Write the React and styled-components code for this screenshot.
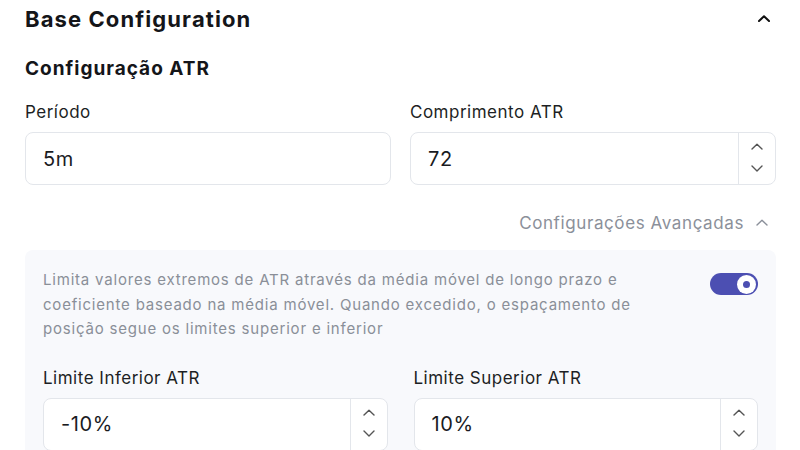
import React from "react";
import styled, { createGlobalStyle } from "styled-components";

const Global = createGlobalStyle`
  html, body { margin: 0; padding: 0; background: #fff; }
  body { font-family: Inter, "Noto Sans", sans-serif; color: #151619; }
  * { box-sizing: border-box; }
`;

const Page = styled.div`
  width: 800px;
  height: 450px;
  overflow: hidden;
  padding: 0 24px 0 25px;
`;

const Header = styled.div`
  display: flex;
  align-items: center;
  justify-content: space-between;
  height: 37px;
  padding-right: 6px;
`;

const Title = styled.h1`
  margin: 0;
  font-size: 22px;
  letter-spacing: 1.1px;
  font-weight: 700;
  color: #141519;
`;

const SubTitle = styled.h2`
  margin: 13px 0 0;
  font-size: 19px;
  letter-spacing: 1px;
  font-weight: 700;
  line-height: 38px;
  color: #141519;
`;

const Grid = styled.div`
  display: grid;
  grid-template-columns: 1fr 1fr;
  column-gap: ${(p) => p.$gap}px;
  margin-top: ${(p) => p.$top || 0}px;
`;

const Field = styled.div`
  display: flex;
  flex-direction: column;
`;

const Label = styled.label`
  font-size: 17px;
  letter-spacing: 0.5px;
  line-height: 24px;
  color: #1d1f24;
  margin-bottom: 8px;
`;

const InputBox = styled.div`
  display: flex;
  height: 53px;
  background: #fff;
  border: 1px solid #e3e6eb;
  border-radius: 8px;
  overflow: hidden;
`;

const Value = styled.div`
  flex: 1;
  display: flex;
  align-items: center;
  padding-left: 17px;
  font-size: 20px;
  letter-spacing: 0.6px;
  color: #1a1b1f;
`;

const Stepper = styled.div`
  width: 37px;
  border-left: 1px solid #e3e6eb;
  display: flex;
  flex-direction: column;
  align-items: center;
  justify-content: center;
  gap: 14px;
  padding-bottom: 2px;
`;

const AdvancedRow = styled.div`
  display: flex;
  justify-content: flex-end;
  align-items: center;
  gap: 12px;
  margin-top: 26px;
  padding-right: 8px;
  height: 24px;
  font-size: 17px;
  letter-spacing: 0.6px;
  color: #8b909a;
`;

const Panel = styled.div`
  margin-top: 15px;
  background: #f8f9fc;
  border-radius: 8px;
  padding: 18px 18px 20px 18px;
  height: 220px;
`;

const DescRow = styled.div`
  display: flex;
  justify-content: space-between;
  align-items: flex-start;
`;

const Desc = styled.p`
  margin: 0;
  max-width: 610px;
  font-size: 15px;
  letter-spacing: 0.8px;
  line-height: 24.5px;
  color: #8a8f98;
`;

const Toggle = styled.div`
  width: 48px;
  height: 22px;
  border-radius: 11px;
  background: #4c4fb2;
  margin-top: 5px;
  display: flex;
  align-items: center;
  justify-content: flex-end;
  padding-right: 2px;
  flex-shrink: 0;
`;

const Knob = styled.div`
  width: 19px;
  height: 19px;
  border-radius: 50%;
  background: #fff;
  display: flex;
  align-items: center;
  justify-content: center;
  &::after {
    content: "";
    width: 7px;
    height: 7px;
    border-radius: 50%;
    background: #4c4fb2;
  }
`;

const Chevron = ({ up, size = 12, color = "#444", width = 1.6 }) => (
  <svg width={size} height={size * 0.6} viewBox="0 0 12 7" fill="none">
    <path
      d={up ? "M1 6L6 1.2L11 6" : "M1 1L6 5.8L11 1"}
      stroke={color}
      strokeWidth={width}
      strokeLinecap="round"
      strokeLinejoin="round"
    />
  </svg>
);

const NumberInput = ({ value, stepper }) => (
  <InputBox>
    <Value>{value}</Value>
    {stepper && (
      <Stepper>
        <Chevron up size={12} color="#555" width={1.4} />
        <Chevron size={12} color="#555" width={1.4} />
      </Stepper>
    )}
  </InputBox>
);

export default function App() {
  return (
    <>
      <Global />
      <Page>
        <Header>
          <Title>Base Configuration</Title>
          <Chevron up size={12} color="#111" width={2} />
        </Header>
        <SubTitle>Configuração ATR</SubTitle>
        <Grid $gap={19} $top={12}>
          <Field>
            <Label>Período</Label>
            <NumberInput value="5m" />
          </Field>
          <Field>
            <Label>Comprimento ATR</Label>
            <NumberInput value="72" stepper />
          </Field>
        </Grid>
        <AdvancedRow>
          Configurações Avançadas
          <Chevron up size={12} color="#8b909a" width={1.4} />
        </AdvancedRow>
        <Panel>
          <DescRow>
            <Desc>
              Limita valores extremos de ATR através da média móvel de longo prazo e
              coeficiente baseado na média móvel. Quando excedido, o espaçamento de
              posição segue os limites superior e inferior
            </Desc>
            <Toggle>
              <Knob />
            </Toggle>
          </DescRow>
          <Grid $gap={26} $top={24}>
            <Field>
              <Label>Limite Inferior ATR</Label>
              <NumberInput value="-10%" stepper />
            </Field>
            <Field>
              <Label>Limite Superior ATR</Label>
              <NumberInput value="10%" stepper />
            </Field>
          </Grid>
        </Panel>
      </Page>
    </>
  );
}
